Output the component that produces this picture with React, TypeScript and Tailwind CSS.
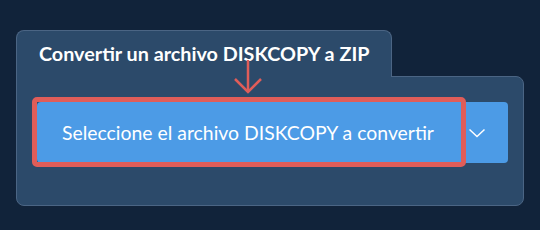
import React from "react";

const App: React.FC = () => {
  return (
    <div className="min-h-[230px] w-full bg-[#11233a] pt-[30px] pl-4 font-['Lato','Liberation_Sans',sans-serif]">
      <div className="w-[508px] flex flex-col">
        {/* Tab title */}
        <div className="relative z-10 w-[376px] h-[47px] border border-b-0 border-[#4b6584] rounded-t-lg bg-[#2c4a6a] pl-[22px] flex items-center">
          <h2 className="text-white font-bold text-[19.75px] leading-none">
            Convertir un archivo DISKCOPY a ZIP
          </h2>
        </div>

        {/* Panel body */}
        <div className="-mt-px h-[130px] border border-[#4b6584] rounded-b-lg rounded-tr-lg bg-[#2c4a6a] pt-[25px] pl-[20px] pr-[15px]">
          <div className="relative flex h-[61px]">
            <button className="w-[409px] h-full bg-[#4c9be6] rounded-l-[4px] text-left pl-[25px] text-white text-[19.4px] font-normal">
              Seleccione el archivo DISKCOPY a convertir
            </button>
            <button className="flex-1 h-full bg-[#4c9be6] rounded-r-[4px] flex items-center justify-center">
              <svg width="18" height="10" viewBox="0 0 18 10" fill="none">
                <polyline
                  points="1.5,1.5 9,8.5 16.5,1.5"
                  stroke="#ffffff"
                  strokeWidth="1.5"
                />
              </svg>
            </button>

            {/* Annotation box */}
            <div className="absolute -left-[5px] -top-[5px] w-[434px] h-[70px] border-[5px] border-[#e05d59] rounded-[5px] pointer-events-none"></div>

            {/* Annotation arrow */}
            <svg
              className="absolute z-20 left-[195px] -top-[44px]"
              width="32"
              height="38"
              viewBox="0 0 32 38"
              fill="none"
            >
              <line x1="16" y1="2" x2="16" y2="34" stroke="#e05d59" strokeWidth="2.5" />
              <polyline
                points="3,21 16,34 29,21"
                stroke="#e05d59"
                strokeWidth="2.5"
              />
            </svg>
          </div>
        </div>
      </div>
    </div>
  );
};

export default App;
